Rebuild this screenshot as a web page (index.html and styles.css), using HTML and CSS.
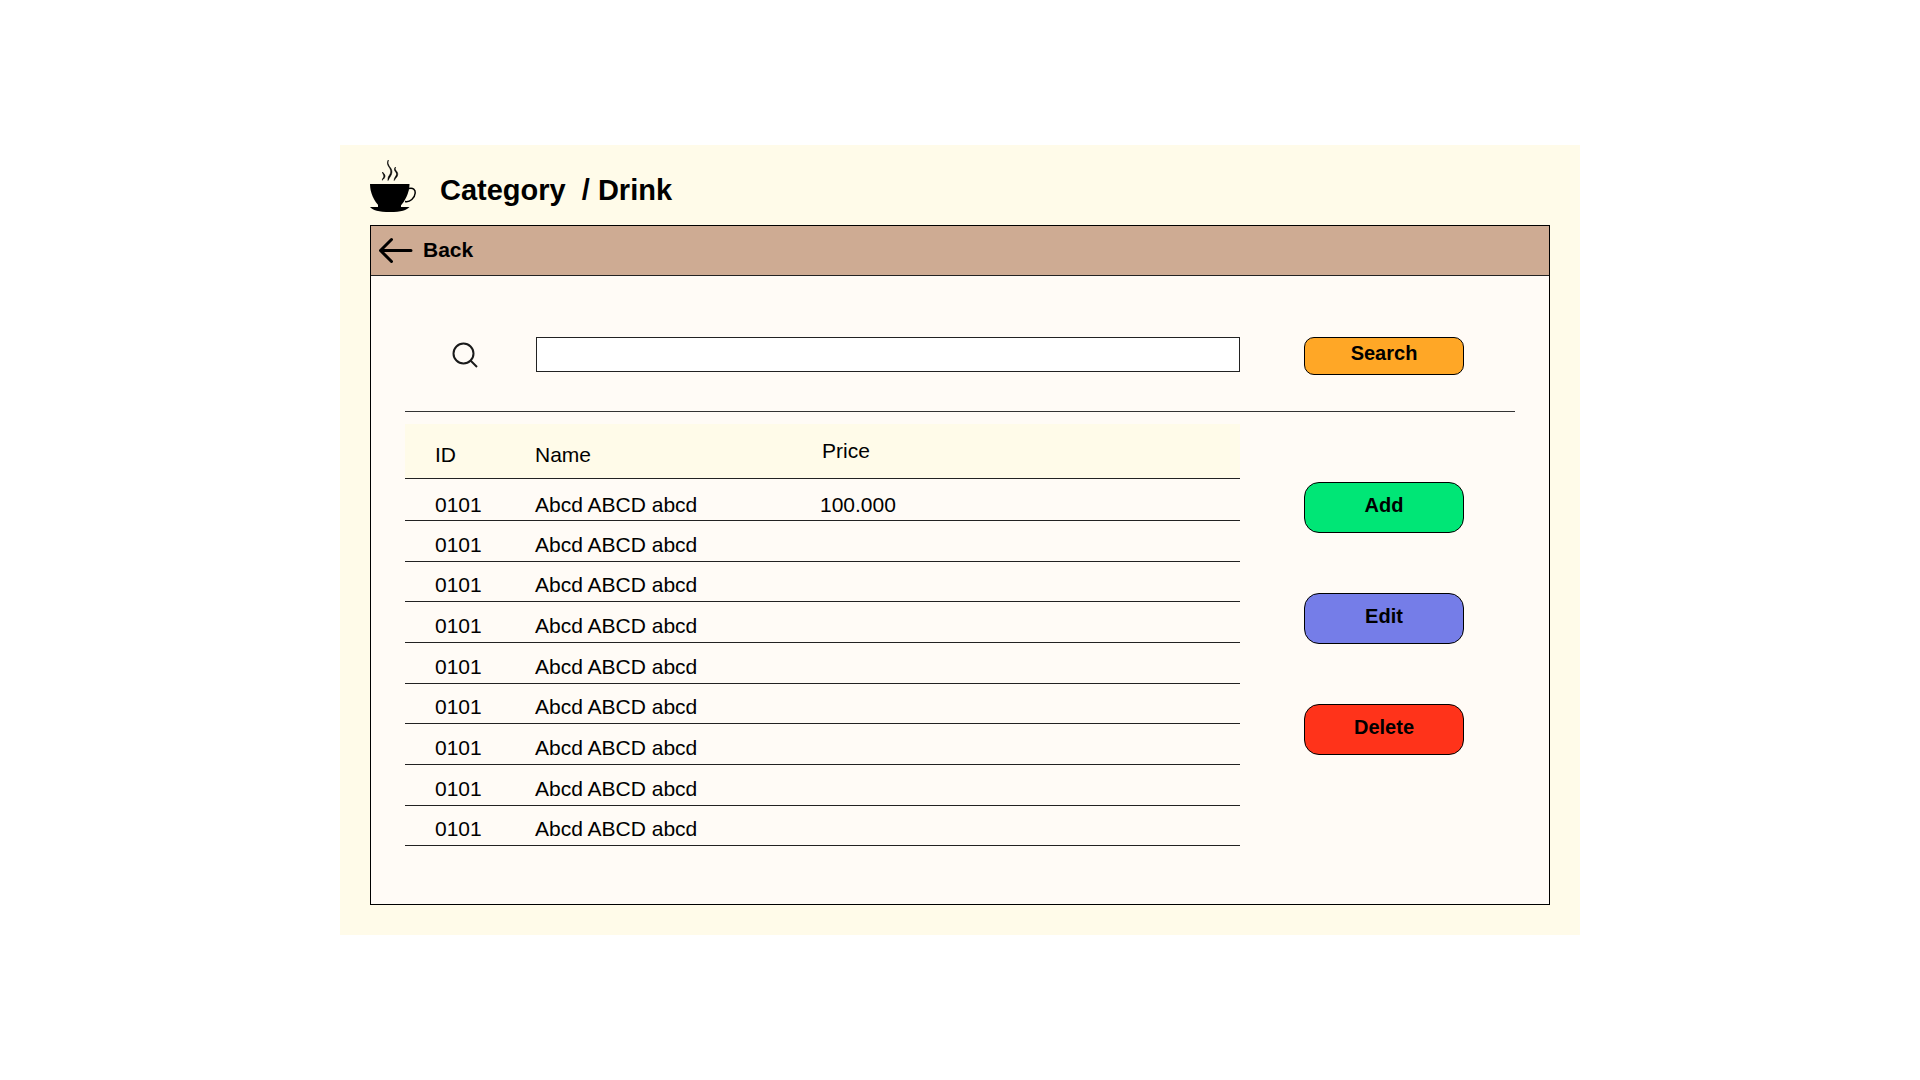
FILE: index.html
```html
<!DOCTYPE html>
<html lang="en">
<head>
<meta charset="utf-8">
<meta name="viewport" content="width=device-width, initial-scale=1">
<title>Category / Drink</title>
<link rel="stylesheet" href="styles.css">
</head>
<body>
<main class="card">
  <header class="card-header">
    <svg class="logo" viewBox="0 5 46 60" aria-hidden="true">
      <path d="M0 29H39.500C39.500 38 35 46 30 51.500H9.500C4 46 0 38 0 29Z"/>
      <path d="M0 52H39.500C37 55 31 57 20 57S2 55 0 52Z"/>
      <path d="M8 50H31V53H8Z"/>
      <path class="line" d="M39 33.500C43 32.500 45.500 34.500 45.200 38C44.800 43 40 47.500 35 46.500"/>
      <path class="steam" d="M18.300 5C15.500 11 21 12 20.800 17C20.600 20 17.500 21 18 25.500C19.500 22 21.800 20.500 21.900 17C22 12 16.500 11 18.300 5Z"/>
      <path class="steam" d="M25.500 12C22.500 16 27 16.500 26.500 19.500C26.200 21.500 24 22.500 24.200 25.500C25.500 23 27.500 22 27.700 19.500C28 16 24 15.500 25.500 12Z"/>
      <path class="steam" d="M12.500 17C12.500 19 14 19.500 13.800 21.500C13.600 23 12.300 23.500 12.300 25.200C13.500 24 14.800 23 15 21.200C15.200 19.500 13.500 18.500 12.500 17Z"/>
    </svg>
    <h1 class="title">Category&nbsp; / Drink</h1>
  </header>

  <section class="panel">
    <nav class="back-bar">
      <a class="back" href="#">
        <svg class="arrow" viewBox="0 0 34 26" aria-hidden="true"><path d="M32 13.500H1.500M12.500 2.500L1.500 13.500L12.500 24.500"/></svg>
        Back
      </a>
    </nav>

    <div class="content">
      <form class="search">
        <label class="search-label" for="query" aria-label="Search items">
          <svg class="magnifier" viewBox="0 0 26 26" aria-hidden="true"><circle cx="11.500" cy="11.500" r="10"/><path d="M18.500 18.500L25 25"/></svg>
        </label>
        <input class="search-input" id="query" type="text">
        <button class="button search-button" type="button">Search</button>
      </form>

      <div class="body">
        <table class="items">
          <colgroup><col class="col-id"><col class="col-name"><col></colgroup>
          <thead>
            <tr><th>ID</th><th>Name</th><th class="price-head">Price</th></tr>
          </thead>
          <tbody>
            <tr><td>0101</td><td>Abcd ABCD abcd</td><td>100.000</td></tr>
            <tr><td>0101</td><td>Abcd ABCD abcd</td><td></td></tr>
            <tr><td>0101</td><td>Abcd ABCD abcd</td><td></td></tr>
            <tr><td>0101</td><td>Abcd ABCD abcd</td><td></td></tr>
            <tr><td>0101</td><td>Abcd ABCD abcd</td><td></td></tr>
            <tr><td>0101</td><td>Abcd ABCD abcd</td><td></td></tr>
            <tr><td>0101</td><td>Abcd ABCD abcd</td><td></td></tr>
            <tr><td>0101</td><td>Abcd ABCD abcd</td><td></td></tr>
            <tr><td>0101</td><td>Abcd ABCD abcd</td><td></td></tr>
          </tbody>
        </table>
        <div class="actions">
          <button class="button add" type="button">Add</button>
          <button class="button edit" type="button">Edit</button>
          <button class="button delete" type="button">Delete</button>
        </div>
      </div>
    </div>
  </section>
</main>
</body>
</html>
```
FILE: styles.css
```css
* {
  box-sizing: border-box;
}

body {
  margin: 0;
  min-height: 100vh;
  display: flex;
  align-items: center;
  justify-content: center;
  background: #fff;
  color: #000;
  font-family: "Liberation Sans", Arial, sans-serif;
  font-size: 21px;
  line-height: 24px;
}

.card {
  width: 100%;
  max-width: 1240px;
  padding: 0 30px 30px;
  background: #fffbe9;
}

.card-header {
  display: flex;
  align-items: center;
  gap: 24px;
  padding: 15px 0 5px;
}

.logo {
  width: 46px;
  height: 60px;
  overflow: visible;
}

.logo .line {
  fill: none;
  stroke: #000;
  stroke-width: 1.5;
}

.logo .steam {
  stroke: #000;
  stroke-width: 0.6;
}

.title {
  margin: 0;
  font-size: 29px;
  line-height: 34px;
  font-weight: 700;
}

.panel {
  border: 1px solid #000;
  background: #fffbf6;
}

.back-bar {
  padding: 12px 8px 13px;
  background: #ceab93;
  border-bottom: 1px solid #222;
}

.back {
  display: inline-flex;
  align-items: center;
  gap: 10px;
  color: inherit;
  font-weight: 700;
  text-decoration: none;
  vertical-align: top;
}

.arrow {
  width: 34px;
  height: 26px;
  margin: -1px 0;
  fill: none;
  stroke: #000;
  stroke-width: 3;
  stroke-linecap: round;
  stroke-linejoin: round;
}

.content {
  padding: 61px 34px 58px;
}

.search {
  display: grid;
  grid-template-columns: 131px 1fr 275px;
  align-items: start;
  padding-bottom: 36px;
  border-bottom: 1px solid #333;
}

.search-label {
  display: flex;
  padding: 5px 0 0 47px;
}

.magnifier {
  width: 26px;
  height: 26px;
  fill: none;
  stroke: #1a1a1a;
  stroke-width: 2;
}

.search-input {
  width: 100%;
  height: 35px;
  padding: 0 10px;
  border: 1px solid #222;
  border-radius: 0;
  background: #fff;
  font: inherit;
}

.button {
  display: block;
  width: 160px;
  padding: 11px 0 16px;
  border: 1px solid #000;
  border-radius: 15px;
  color: #000;
  font-family: inherit;
  font-size: 20px;
  line-height: 22px;
  font-weight: 700;
}

.search-button {
  margin-left: 64px;
  padding: 4px 0 10px;
  border-radius: 10px;
  background: #ffa726;
}

.add {
  background: #00e676;
}

.edit {
  background: #757de8;
}

.delete {
  background: #ff331a;
}

.body {
  display: grid;
  grid-template-columns: 1fr 275px;
  align-items: start;
  padding-top: 12px;
}

.items {
  width: 100%;
  table-layout: fixed;
  border-spacing: 0;
}

.col-id {
  width: 130px;
}

.col-name {
  width: 285px;
}

.items th,
.items td {
  padding: 0 0 4px;
  border-bottom: 1px solid #222;
  text-align: left;
  vertical-align: bottom;
  font-weight: 400;
}

.items th:first-child,
.items td:first-child {
  padding-left: 30px;
}

.items th {
  height: 55px;
  padding-bottom: 11px;
  background: #fffbe9;
}

.items .price-head {
  padding: 0 0 15px 2px;
}

.items td {
  height: 41px;
}

.items tr:nth-child(3n) td {
  height: 40px;
}

.items tbody tr:first-child td {
  height: 42px;
  padding-bottom: 3px;
}

.actions {
  display: flex;
  flex-direction: column;
  gap: 60px;
  padding: 58px 0 0 64px;
}
```
